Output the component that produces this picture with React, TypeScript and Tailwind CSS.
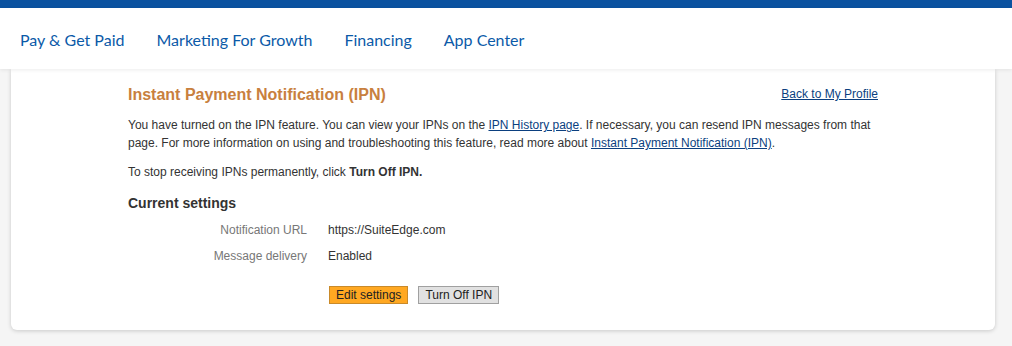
import React from "react";

const navItems = ["Pay & Get Paid", "Marketing For Growth", "Financing", "App Center"];

const SettingRow = ({ label, value }: { label: string; value: string }) => (
  <div className="flex items-center h-[26px]">
    <div className="w-[200px] text-right text-[#777] pr-[21px]">{label}</div>
    <div className="text-[#333]">{value}</div>
  </div>
);

export default function App() {
  return (
    <div className="min-h-[346px] w-[1012px] bg-[#f5f5f5] font-['Liberation_Sans',Arial,sans-serif]">
      <div className="h-[8px] bg-[#0b52a0]"></div>
      <nav className="relative z-10 h-[61px] bg-white shadow-[0_1px_4px_rgba(0,0,0,0.08)] flex items-center pl-[20px] gap-[32px] pt-[3px]">
        {navItems.map((item) => (
          <span key={item} className="text-[16px] text-[#0b5aa8] font-['Lato',sans-serif]">
            {item}
          </span>
        ))}
      </nav>
      <div className="mx-[11px] mr-[17px] bg-white rounded-b-[6px] shadow-[0_1px_4px_rgba(0,0,0,0.18)] pt-[16px] pb-[26px] pl-[117px] pr-[117px]">
        <div className="flex items-start justify-between">
          <h1 className="text-[16px] font-bold text-[#c8803e] leading-[20px]">Instant Payment Notification (IPN)</h1>
          <a className="text-[12px] text-[#0b3f7f] underline">Back to My Profile</a>
        </div>
        <div className="text-[12px] text-[#333] leading-[18px] mt-[11px]">
          <p>
            You have turned on the IPN feature. You can view your IPNs on the{" "}
            <a className="underline text-[#0b3f7f]">IPN History page</a>. If necessary, you can resend IPN messages from that
            page. For more information on using and troubleshooting this feature, read more about{" "}
            <a className="underline text-[#0b3f7f]">Instant Payment Notification (IPN)</a>.
          </p>
          <p className="mt-[11px]">
            To stop receiving IPNs permanently, click <b>Turn Off IPN.</b>
          </p>
          <h2 className="text-[14px] font-bold text-[#333] mt-[12px] leading-[20px]">Current settings</h2>
          <div className="mt-[4px]">
            <SettingRow label="Notification URL" value="https://SuiteEdge.com" />
            <SettingRow label="Message delivery" value="Enabled" />
          </div>
          <div className="flex gap-[10px] ml-[201px] mt-[17px]">
            <button className="h-[18px] px-[6px] bg-[#ffa822] border border-[#c98a2a] text-[12px] text-[#222] leading-[16px]">
              Edit settings
            </button>
            <button className="h-[18px] px-[6px] bg-[#e1e1e1] border border-[#a0a0a0] text-[12px] text-[#222] leading-[16px]">
              Turn Off IPN
            </button>
          </div>
        </div>
      </div>
    </div>
  );
}
